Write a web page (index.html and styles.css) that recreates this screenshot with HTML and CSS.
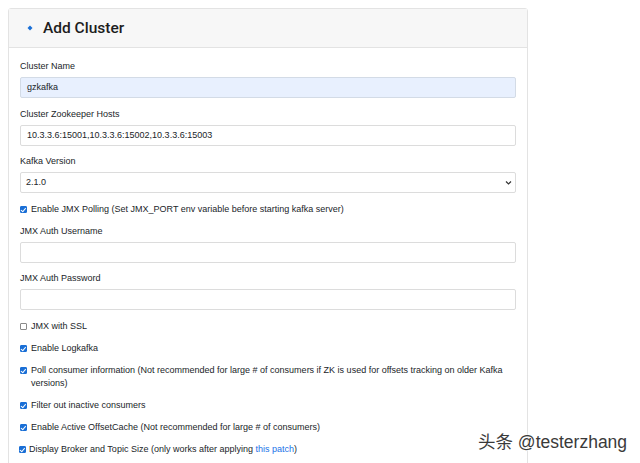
FILE: index.html
```html
<!DOCTYPE html>
<html>
<head>
<meta charset="utf-8">
<link rel="stylesheet" href="styles.css">
</head>
<body>
<div class="card">
  <div class="card-header">
    <svg class="hdr-icon" width="6" height="6" viewBox="0 0 6 6"><path d="M3 0.5 L5.5 3 L3 5.5 L0.5 3 Z" fill="#1a6fd6"/></svg>
    <h3 class="title">Add Cluster</h3>
  </div>
  <div class="card-body">
    <div class="group">
      <label class="lbl">Cluster Name</label>
      <div class="input autofill">gzkafka</div>
    </div>
    <div class="group">
      <label class="lbl">Cluster Zookeeper Hosts</label>
      <div class="input">10.3.3.6:15001,10.3.3.6:15002,10.3.3.6:15003</div>
    </div>
    <div class="group">
      <label class="lbl">Kafka Version</label>
      <div class="input select">2.1.0
        <svg class="chev" width="7" height="7" viewBox="0 0 7 7"><path d="M1 2.5 L3.5 5 L6 2.5" fill="none" stroke="#333" stroke-width="1.2"/></svg>
      </div>
    </div>
    <div class="check"><span class="box on"></span><span>Enable JMX Polling (Set JMX_PORT env variable before starting kafka server)</span></div>
    <div class="group">
      <label class="lbl">JMX Auth Username</label>
      <div class="input"></div>
    </div>
    <div class="group">
      <label class="lbl">JMX Auth Password</label>
      <div class="input"></div>
    </div>
    <div class="check"><span class="box"></span><span>JMX with SSL</span></div>
    <div class="check"><span class="box on"></span><span>Enable Logkafka</span></div>
    <div class="check"><span class="box on"></span><span>Poll consumer information (Not recommended for large # of consumers if ZK is used for offsets tracking on older Kafka versions)</span></div>
    <div class="check"><span class="box on"></span><span>Filter out inactive consumers</span></div>
    <div class="check"><span class="box on"></span><span>Enable Active OffsetCache (Not recommended for large # of consumers)</span></div>
    <div class="check tight"><span class="box on"></span><span>Display Broker and Topic Size (only works after applying <a class="link">this patch</a>)</span></div>
  </div>
</div>
<div class="watermark">头条 @testerzhang</div>
</body>
</html>
```
FILE: styles.css
```css
html, body {
  margin: 0;
  padding: 0;
  background: #fff;
  overflow: hidden;
}
body {
  padding: 8px;
  font-family: "Liberation Sans", Arial, sans-serif;
  font-size: 9px;
  color: #212529;
  height: 463px;
  box-sizing: border-box;
}
.card {
  width: 520px;
  box-sizing: border-box;
  border: 1px solid #e3e3e3;
  border-radius: 3px;
  height: 480px;
}
.card-header {
  height: 39px;
  box-sizing: border-box;
  background: #f7f7f7;
  border-bottom: 1px solid #e3e3e3;
  display: flex;
  align-items: center;
  padding-left: 18px;
}
.hdr-icon {
  margin-right: 10px;
  margin-top: 0px;
}
.title {
  margin: 0;
  font-family: Roboto, "Liberation Sans", sans-serif;
  font-weight: 500;
  font-size: 15.5px;
  color: #1d1d1d;
}
.card-body {
  padding: 12px 11px 0 11px;
}
.group {
  margin-bottom: 9.5px;
}
.lbl {
  display: block;
  line-height: 13px;
  margin-bottom: 4px;
}
.input {
  height: 21px;
  box-sizing: border-box;
  border: 1px solid #dcdcdc;
  border-radius: 2px;
  padding: 0 6px;
  line-height: 19px;
  background: #fff;
  position: relative;
}
.autofill {
  background: #e8f0fe;
  border-color: #d3dbe6;
}
.select {
  padding-left: 5px;
}
.chev {
  position: absolute;
  right: 3px;
  top: 6px;
}
.check {
  display: flex;
  align-items: flex-start;
  line-height: 13px;
  margin-bottom: 9px;
  padding-right: 10px;
}
.box {
  flex: none;
  width: 7px;
  height: 7px;
  box-sizing: border-box;
  border: 1px solid #8a8a8a;
  border-radius: 1px;
  margin: 3px 4px 0 0;
  background: #fff;
  position: relative;
}
.box.on {
  background: #1a6fd6;
  border-color: #1a6fd6;
}
.box.on::after {
  content: "";
  position: absolute;
  left: 1px;
  top: 0px;
  width: 2px;
  height: 3.5px;
  border: solid #fff;
  border-width: 0 1px 1px 0;
  transform: rotate(40deg);
}
.tight .box {
  margin-left: -1px;
  margin-right: 3px;
}
.link {
  color: #1a73e8;
}
.watermark {
  position: absolute;
  left: 478px;
  top: 428px;
  font-family: "Liberation Sans", "Noto Sans CJK SC", sans-serif;
  font-size: 17.5px;
  color: #3a3a3a;
  text-shadow: 0 0 2px #fff, 0 0 2px #fff;
  white-space: nowrap;
}
```
